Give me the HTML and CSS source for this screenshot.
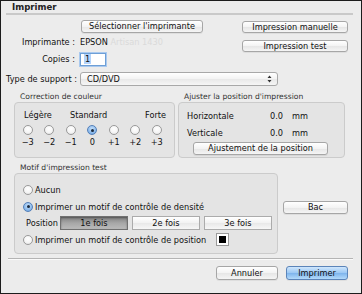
FILE: index.html
```html
<!DOCTYPE html>
<html lang="fr">
<head>
<meta charset="utf-8">
<title>Imprimer</title>
<link rel="stylesheet" href="styles.css">
</head>
<body>
<div class="window">
  <div class="title">Imprimer</div>

  <div class="top">
    <div class="top-left">
      <div class="row-btn"><button class="btn btn-select">Sélectionner l'imprimante</button></div>
      <div class="field f-printer"><span class="lbl">Imprimante :</span><span class="val">EPSON <span class="faint">Artisan 1430</span></span></div>
      <div class="field f-copies"><span class="lbl">Copies :</span><span class="input"><span class="sel-text">1</span></span></div>
    </div>
    <div class="top-right">
      <button class="btn btn-side">Impression manuelle</button>
      <button class="btn btn-side">Impression test</button>
    </div>
  </div>

  <div class="support">
    <span class="lbl-support">Type de support :</span>
    <div class="popup">
      <span>CD/DVD</span>
      <svg class="arrows" width="5" height="8" viewBox="0 0 5 8"><path d="M0.5 3 L2.5 0.5 L4.5 3 Z M0.5 5 L2.5 7.5 L4.5 5 Z" fill="#333"/></svg>
    </div>
  </div>

  <div class="groups">
    <div class="group g-color">
      <div class="group-title">Correction de couleur</div>
      <div class="box box-color">
        <div class="scale-labels"><span class="s-l">Légère</span><span class="s-s">Standard</span><span class="s-f">Forte</span></div>
        <div class="scale">
          <div class="step"><span class="radio"></span><span class="num">−3</span></div>
          <div class="step"><span class="radio"></span><span class="num">−2</span></div>
          <div class="step"><span class="radio"></span><span class="num">−1</span></div>
          <div class="step"><span class="radio on"></span><span class="num">0</span></div>
          <div class="step"><span class="radio"></span><span class="num">+1</span></div>
          <div class="step"><span class="radio"></span><span class="num">+2</span></div>
          <div class="step"><span class="radio"></span><span class="num">+3</span></div>
        </div>
      </div>
    </div>
    <div class="group g-pos">
      <div class="group-title">Ajuster la position d'impression</div>
      <div class="box box-pos">
        <div class="pos-row"><span class="p-lbl">Horizontale</span><span class="p-val">0.0</span><span>mm</span></div>
        <div class="pos-row"><span class="p-lbl">Verticale</span><span class="p-val">0.0</span><span>mm</span></div>
        <div class="pos-btn-row"><button class="btn btn-adjust">Ajustement de la position</button></div>
      </div>
    </div>
  </div>

  <div class="motif-row">
    <div class="group g-motif">
      <div class="group-title">Motif d'impression test</div>
      <div class="box box-motif">
        <div class="opt"><span class="radio"></span><span>Aucun</span></div>
        <div class="opt"><span class="radio on"></span><span>Imprimer un motif de contrôle de densité</span></div>
        <div class="seg-row">
          <span class="seg-lbl">Position</span>
          <span class="seg pressed">1e fois</span>
          <span class="seg">2e fois</span>
          <span class="seg">3e fois</span>
        </div>
        <div class="opt"><span class="radio"></span><span>Imprimer un motif de contrôle de position</span><span class="swatch"><span></span></span></div>
      </div>
    </div>
    <button class="btn btn-bac">Bac</button>
  </div>

  <div class="sep"></div>

  <div class="actions">
    <button class="btn btn-act">Annuler</button>
    <button class="btn btn-act primary">Imprimer</button>
  </div>
</div>
</body>
</html>
```

FILE: styles.css
```css
* { box-sizing: border-box; }
html, body { margin: 0; padding: 0; }
body {
  font-family: "DejaVu Sans", "Liberation Sans", sans-serif;
  font-size: 8.2px;
  color: #111;
  background: #ececec;
}
.window {
  width: 362px;
  height: 294px;
  border: 1px solid #1c1c1c;
  background: #ececec;
  padding: 0 8px 0 5px;
  overflow: hidden;
}
.title {
  font-weight: bold;
  font-size: 8.6px;
  line-height: 12px;
  padding: 0 0 0 6px;
  border-bottom: 2px solid #c9c9c9;
  height: 14px;
  color: #222;
}
.btn {
  font-family: inherit;
  font-size: 8.2px;
  color: #111;
  border: 1px solid #a6a6a6;
  border-radius: 3px;
  background: linear-gradient(#ffffff, #f3f3f3 50%, #e6e6e6 51%, #f5f5f5);
  padding: 0;
  line-height: 11px;
  height: 13px;
  box-shadow: 0 1px 0 rgba(0,0,0,0.06);
  white-space: nowrap;
}
.top { display: flex; }
.top-left { flex: 1; }
.row-btn { padding: 5px 0 0 75px; height: 19px; }
.btn-select { width: 122px; }
.field { display: flex; align-items: center; }
.lbl { width: 69px; text-align: right; margin-right: 5px; white-space: nowrap; }
.f-printer { height: 16px; }
.f-copies { height: 18px; }
.faint { color: #dadada; }
.input {
  width: 26px; height: 13px;
  background: #fff;
  border: 1px solid #6e9fd6;
  box-shadow: 0 0 0 1px #a9c9ef;
  display: flex; align-items: center;
  padding-left: 3px;
}
.sel-text { background: #b3d3fb; line-height: 10px; padding: 0 1px; }
.top-right {
  width: 106px;
  margin-right: 5px;
  padding-top: 6px;
  display: flex; flex-direction: column; gap: 7px;
}
.btn-side { width: 106px; height: 12px; line-height: 10px; }

.support { display: flex; align-items: center; margin-top: 4px; height: 14px; }
.lbl-support { width: 74px; white-space: nowrap; }
.popup {
  width: 198px; height: 14px;
  border: 1px solid #a8a8a8; border-radius: 3px;
  background: linear-gradient(#ffffff, #f3f3f3 50%, #e8e8e8 51%, #f6f6f6);
  display: flex; align-items: center; justify-content: space-between;
  padding: 0 5px 0 6px;
}
.arrows { display: block; }

.groups { display: flex; gap: 3px; margin-top: 5px; padding-left: 8px; }
.group-title { font-size: 7.6px; line-height: 11px; padding-left: 6px; color: #333; height: 11px; white-space: nowrap; }
.box {
  background: #e4e4e4;
  border: 1px solid #cbcbcb;
  border-radius: 4px;
}
.g-color { width: 161px; }
.g-pos { width: 167px; }
.box-color { height: 56px; padding: 7px 0 0 2px; }
.scale-labels { display: flex; padding-left: 7px; line-height: 11px; height: 11px; }
.s-l { width: 46px; }
.s-s { width: 75px; }
.scale { display: flex; margin-top: 4px; }
.step { width: 21.5px; display: flex; flex-direction: column; align-items: center; }
.num { line-height: 11px; margin-top: 2px; }
.radio {
  display: inline-block;
  width: 10px; height: 10px;
  border-radius: 50%;
  border: 1px solid #9a9a9a;
  background: radial-gradient(circle at 50% 35%, #ffffff, #f5f5f5 55%, #dedede);
  position: relative;
  flex: none;
}
.radio.on {
  border-color: #5580b8;
  background: radial-gradient(circle at 50% 35%, #c6e0fa, #8cbaec 60%, #6199da);
}
.radio.on::after {
  content: "";
  position: absolute;
  left: 2.5px; top: 2.5px;
  width: 3px; height: 3px;
  border-radius: 50%;
  background: #1b2a3d;
}
.box-pos { height: 56px; padding: 4px 0 0 8px; }
.pos-row { display: flex; height: 17px; align-items: center; }
.p-lbl { width: 83px; }
.p-val { width: 22px; }
.pos-btn-row { padding: 1px 0 0 6px; }
.btn-adjust { width: 135px; height: 13px; }

.motif-row { display: flex; margin-top: 5px; padding-left: 8px; }
.g-motif { width: 264px; }
.g-motif .group-title { line-height: 10px; height: 10px; }
.box-motif { height: 81px; padding: 7px 0 0 8px; }
.opt { display: flex; align-items: center; height: 17px; gap: 2px; white-space: nowrap; }
.seg-row { display: flex; align-items: center; height: 16px; padding-left: 3px; }
.seg-lbl { width: 34px; }
.seg {
  width: 68px; height: 14px;
  margin-right: 4px;
  border: 1px solid #ababab;
  background: linear-gradient(#ffffff, #f2f2f2 50%, #e8e8e8 51%, #f7f7f7);
  text-align: center;
  line-height: 12px;
}
.seg.pressed {
  background: linear-gradient(#7f7f7f, #a7a7a7 50%, #bababa);
  border-color: #707070;
  box-shadow: inset 0 1px 2px rgba(0,0,0,0.35);
}
.swatch {
  width: 13px; height: 13px;
  margin-left: 8px;
  border: 1px solid #9a9a9a;
  background: #fff;
  padding: 2px;
}
.swatch span { display: block; width: 100%; height: 100%; background: #000; }
.btn-bac { width: 65px; height: 13px; margin: 38px 0 0 5px; }

.sep {
  margin: 4px 0 0 2px;
  height: 2px;
  border-top: 1px solid #b4b4b4;
  border-bottom: 1px solid #fafafa;
}
.actions { display: flex; justify-content: flex-end; gap: 8px; margin-top: 6px; padding-right: 5px; }
.btn-act { width: 62px; height: 14px; line-height: 12px; }
.primary {
  border-color: #5b84b9;
  background: linear-gradient(#cfe6fd, #9ac7f4 50%, #7db3ec 51%, #b3dafb);
}
```
